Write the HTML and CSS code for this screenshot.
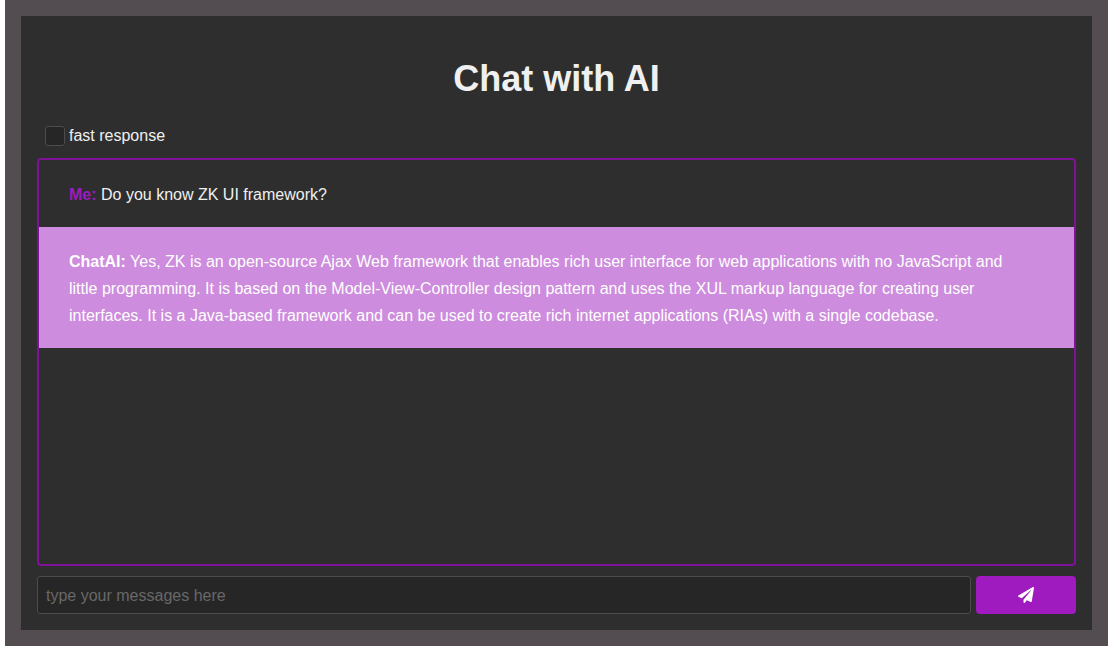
FILE: index.html
```html
<!DOCTYPE html>
<html lang="en">
<head>
  <meta charset="UTF-8" />
  <meta name="viewport" content="width=device-width, initial-scale=1.0"/>
  <title>Chat with AI</title>
  <link rel="stylesheet" href="styles.css">
</head>
<body>
  <div class="page">
    <main class="panel">
      <h1>Chat with AI</h1>
      <div class="options">
        <input type="checkbox" id="fast">
        <label for="fast">fast response</label>
      </div>
      <div class="messages">
        <p class="message"><strong>Me:</strong> Do you know ZK UI framework?</p>
        <p class="message ai"><strong>ChatAI:</strong> Yes, ZK is an open-source Ajax Web framework that enables rich user interface for web applications with no JavaScript and little programming. It is based on the Model-View-Controller design pattern and uses the XUL markup language for creating user interfaces. It is a Java-based framework and can be used to create rich internet applications (RIAs) with a single codebase.</p>
      </div>
      <form class="composer" onsubmit="return false">
        <input type="text" placeholder="type your messages here" aria-label="Message">
        <button type="submit" aria-label="Send">
          <svg viewBox="0 0 512 512" width="16" height="16" aria-hidden="true">
            <path fill="currentColor" d="M476 3.200L12.500 270.600c-18.100 10.400-15.800 35.600 2.200 43.200L121 358.400l287.300-253.200c5.500-4.900 13.300 2.600 8.600 8.300L176 407v80.500c0 23.600 28.500 32.900 42.500 15.800L282 426l124.600 52.200c14.200 6 30.400-2.900 33-18.200l72-432C515 7.800 493.300-6.800 476 3.200z"/>
          </svg>
        </button>
      </form>
    </main>
  </div>
</body>
</html>
```
FILE: styles.css
```css
* {
  box-sizing: border-box;
}
body {
  margin: 0 5px;
  background: #fff;
  color: #f0f0f0;
  font-family: "Helvetica Neue", Helvetica, "Liberation Sans", Arial, sans-serif;
  font-size: 16px;
}
.page {
  display: flex;
  min-height: 100vh;
  padding: 16px;
  background: #534c50;
}
.panel {
  flex: 1;
  display: flex;
  flex-direction: column;
  padding: 16px;
  background: #2e2e2e;
}
h1 {
  margin: 24px 0;
  font-size: 36px;
  line-height: 46px;
  text-align: center;
}
.options {
  display: flex;
  align-items: center;
  gap: 4px;
  height: 20px;
  margin: 0 8px 12px;
}
.options input {
  appearance: none;
  width: 20px;
  height: 20px;
  margin: 0;
  border: 1px solid #4c4c4c;
  border-radius: 3px;
  background: #262626;
}
.options input:checked {
  background: #9f1abf;
}
.messages {
  flex: 1;
  border: 2px solid #7f1299;
  border-radius: 4px;
}
.message {
  margin: 0;
  padding: 21px 48px 19px 30px;
  line-height: 27px;
}
.message strong {
  color: #9f1abf;
}
.message.ai {
  background: #cd8cdd;
  color: #fff;
}
.message.ai strong {
  color: #fff;
}
.composer {
  display: flex;
  gap: 5px;
  margin-top: 10px;
}
.composer input {
  flex: 1;
  min-width: 0;
  height: 38px;
  padding: 2px 8px 0;
  border: 1px solid #4c4c4c;
  border-radius: 3px;
  background: #262626;
  color: #f0f0f0;
  font: inherit;
}
.composer input::placeholder {
  color: #686868;
}
.composer button {
  display: flex;
  align-items: center;
  justify-content: center;
  width: 100px;
  border: none;
  border-radius: 4px;
  background: #9f1abf;
  color: #fff;
  cursor: pointer;
}
.composer button:hover {
  background: #7f1299;
}
```
